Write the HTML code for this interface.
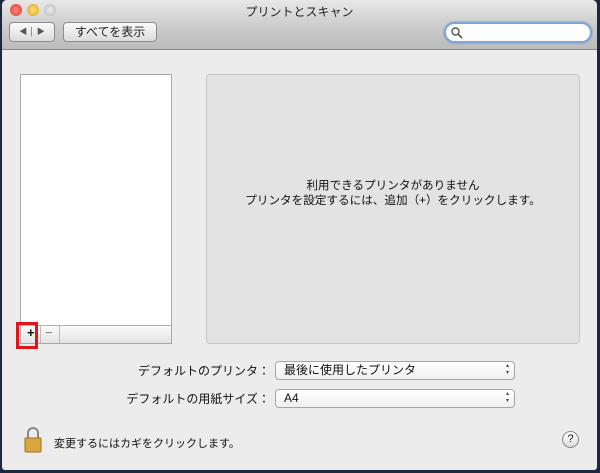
<!DOCTYPE html><html><head><meta charset="utf-8"><style>
*{margin:0;padding:0;box-sizing:border-box}
body{width:600px;height:473px;background:#1c2740;position:relative;overflow:hidden;font-family:"Liberation Sans","Noto Sans CJK JP",sans-serif;color:#111}
.win{position:absolute;left:2px;top:0;width:595px;height:470px;background:#ececec;border-radius:5px 5px 3px 3px;overflow:hidden}
.tb{position:absolute;left:0;top:0;width:100%;height:50px;background:linear-gradient(#e8e8e8,#c9c9c9 60%,#bcbcbc);border-bottom:1px solid #8a8a8a}
.dot{position:absolute;top:4px;width:12px;height:12px;border-radius:50%}
.title{position:absolute;top:3px;left:0;width:100%;text-align:center;font-size:12px;color:#222}
.btn{position:absolute;top:22px;height:20px;border:1px solid #8c8c8c;border-radius:4px;background:linear-gradient(#fafafa,#dcdcdc);font-size:12px;text-align:center;line-height:18px;color:#222}
.search{position:absolute;left:442px;top:22px;width:148px;height:21px;border-radius:11px;background:#fff;border:2px solid #7ea6d8;box-shadow:0 0 2px #5b8dd0}
.list{position:absolute;left:18px;top:74px;width:152px;height:270px;background:#fff;border:1px solid #a8a8a8}
.bar{position:absolute;left:0;bottom:0;width:100%;height:18px;background:linear-gradient(#fafafa,#e4e4e4);border-top:1px solid #b0b0b0;font-size:13px}
.panel{position:absolute;left:204px;top:74px;width:374px;height:270px;background:#e3e3e3;border:1px solid #c6c6c6;border-radius:4px}
.msg{position:absolute;left:0;width:100%;text-align:center;font-size:11.6px;color:#111}
.lbl{position:absolute;font-size:12px;text-align:right;width:150px;left:118px}
.pop{position:absolute;left:273px;width:240px;height:19px;background:linear-gradient(#fff,#f0f0f0);border:1px solid #a5a5a5;border-radius:4px;font-size:12px;padding-left:8px;line-height:17px}
.pop:after{content:"▴\A▾";white-space:pre;position:absolute;right:5px;top:1px;font-size:6px;line-height:7px;color:#444}
</style></head><body><div class="win">
<div class="tb">
<div class="dot" style="left:8px;background:radial-gradient(#ff8a7a,#d8382b)"></div>
<div class="dot" style="left:25px;background:radial-gradient(#ffe27a,#d9a21b)"></div>
<div class="dot" style="left:42px;background:radial-gradient(#eee,#b5b5b5)"></div>
<div class="title">プリントとスキャン</div>
<div class="btn" style="left:7px;width:46px;font-size:8px;color:#555">◀ │ ▶</div>
<div class="btn" style="left:61px;width:94px">すべてを表示</div>
<div class="search"><svg width="14" height="14" style="position:absolute;left:4px;top:2px"><circle cx="5.5" cy="5.5" r="3.5" fill="none" stroke="#555" stroke-width="1.4"/><path d="M8 8l4 4" stroke="#555" stroke-width="1.6"/></svg></div>
</div>
<div class="list"><div class="bar"><span style="position:absolute;left:6px;top:-1px;font-weight:bold">+</span><span style="position:absolute;left:19px;top:-1px;width:1px;height:18px;background:#bbb"></span><span style="position:absolute;left:24px;top:-1px;color:#777">−</span><span style="position:absolute;left:38px;top:-1px;width:1px;height:18px;background:#bbb"></span></div></div>
<div style="position:absolute;left:14px;top:322px;width:22px;height:27px;border:3px solid #e0141c"></div>
<div class="panel"><div class="msg" style="top:102px">利用できるプリンタがありません</div><div class="msg" style="top:117px">プリンタを設定するには、追加（+）をクリックします。</div></div>
<div class="lbl" style="top:362px">デフォルトのプリンタ：</div>
<div class="pop" style="top:361px">最後に使用したプリンタ</div>
<div class="lbl" style="top:390px">デフォルトの用紙サイズ：</div>
<div class="pop" style="top:389px">A4</div>
<svg width="18" height="28" style="position:absolute;left:22px;top:426px"><path d="M4 12V7a5 5 0 0 1 10 0v5" fill="none" stroke="#888" stroke-width="2"/><rect x="1" y="12" width="16" height="14" rx="1" fill="#d9a640" stroke="#9a7020"/></svg>
<div style="position:absolute;left:52px;top:435px;font-size:11px">変更するにはカギをクリックします。</div>
<div style="position:absolute;left:560px;top:431px;width:17px;height:17px;border-radius:50%;border:1px solid #888;background:linear-gradient(#fff,#ddd);text-align:center;font-size:11px;line-height:15px">?</div>
</div></body></html>
